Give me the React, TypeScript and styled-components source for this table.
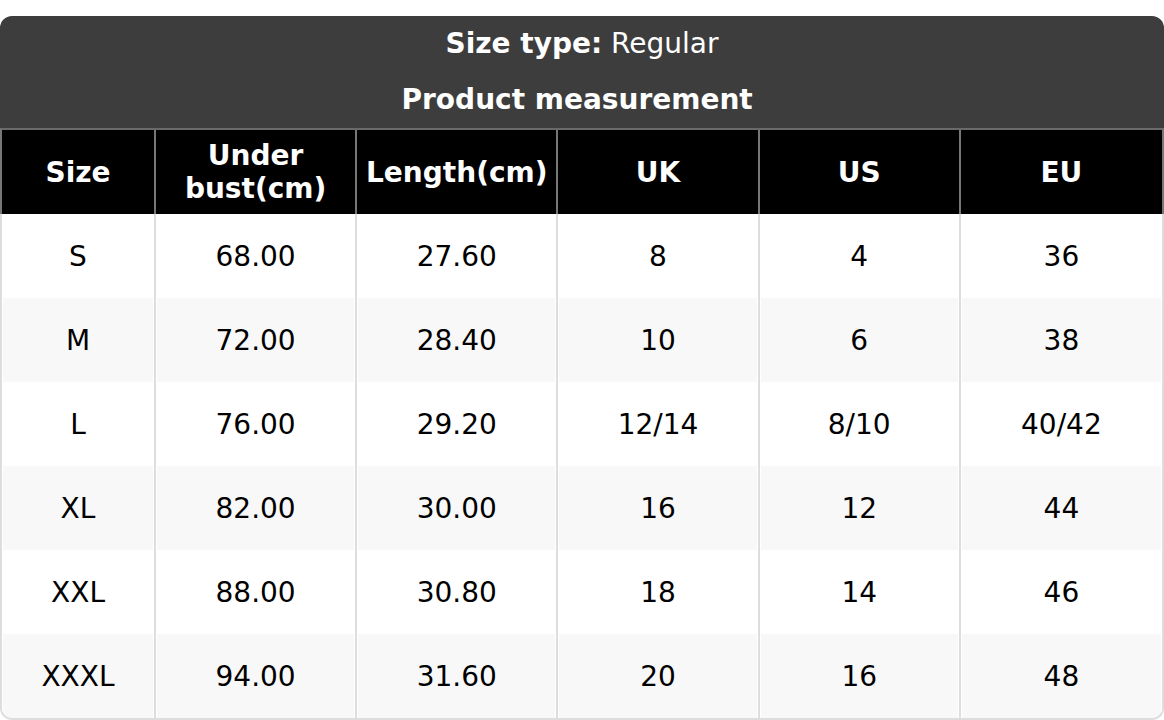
import React from 'react'
import styled, { createGlobalStyle } from 'styled-components'

const columns = ['Size', 'Under bust(cm)', 'Length(cm)', 'UK', 'US', 'EU']

const rows = [
  ['S', '68.00', '27.60', '8', '4', '36'],
  ['M', '72.00', '28.40', '10', '6', '38'],
  ['L', '76.00', '29.20', '12/14', '8/10', '40/42'],
  ['XL', '82.00', '30.00', '16', '12', '44'],
  ['XXL', '88.00', '30.80', '18', '14', '46'],
  ['XXXL', '94.00', '31.60', '20', '16', '48'],
]

export default function App() {
  return (
    <>
      <GlobalStyle />
      <Page>
        <Chart>
          <TitleBar>
            <TitleLine>
              <strong>Size type:</strong> Regular
            </TitleLine>
            <TitleLine>
              <strong>{'Product measurement '}</strong>
            </TitleLine>
          </TitleBar>
          <HeadRow>
            {columns.map((name) => (
              <HeadCell key={name}>
                {name === 'Under bust(cm)' ? (
                  <>
                    Under
                    <br />
                    bust(cm)
                  </>
                ) : (
                  name
                )}
              </HeadCell>
            ))}
          </HeadRow>
          <Body>
            {rows.map((row, index) => (
              <Row key={row[0]} striped={index % 2 === 1}>
                {row.map((value, i) => (
                  <Cell key={i} striped={index % 2 === 1}>
                    {value}
                  </Cell>
                ))}
              </Row>
            ))}
          </Body>
        </Chart>
      </Page>
    </>
  )
}

const GlobalStyle = createGlobalStyle`
  body {
    margin: 0;
    background: #fff;
    font-family: "DejaVu Sans", "Liberation Sans", sans-serif;
  }
`

const Page = styled.div`
  padding-top: 16px;
  width: 1164px;
`

const Chart = styled.div`
  border-radius: 12px 12px 0 0;
  overflow: hidden;
`

const TitleBar = styled.div`
  background: #3d3d3d;
  color: #fff;
`

const TitleLine = styled.div`
  height: 56px;
  display: flex;
  align-items: center;
  justify-content: center;
  font-size: 28px;
  white-space: pre;
  padding-bottom: 1px;
  box-sizing: border-box;

  strong {
    font-weight: bold;
  }
`

const grid = `
  display: grid;
  grid-template-columns: 154px repeat(5, 1fr);
`

const HeadRow = styled.div`
  ${grid}
  background: #000;
  border-top: 2px solid #6a6a6a;
  border-left: 2px solid #777;
  border-right: 2px solid #777;
`

const HeadCell = styled.div`
  height: 84px;
  display: flex;
  align-items: center;
  justify-content: center;
  text-align: center;
  color: #fff;
  font-size: 28px;
  font-weight: bold;
  line-height: 33px;
  border-right: 2px solid #777;

  &:last-child {
    border-right: none;
  }
`

const Body = styled.div`
  border: 2px solid #ddd;
  border-top: none;
  border-radius: 0 0 12px 12px;
  overflow: hidden;
`

const Row = styled.div<{ striped: boolean }>`
  ${grid}
  background: ${(p) => (p.striped ? '#f8f8f8' : '#fff')};
`

const Cell = styled.div<{ striped: boolean }>`
  height: 84px;
  display: flex;
  align-items: center;
  justify-content: center;
  color: #000;
  font-size: 28px;
  border-right: 2px solid #ddd;
  ${(p) => (p.striped ? 'box-shadow: inset 1px 0 0 #fff, inset -1px 0 0 #fff;' : '')}

  &:last-child {
    border-right: none;
  }
`
